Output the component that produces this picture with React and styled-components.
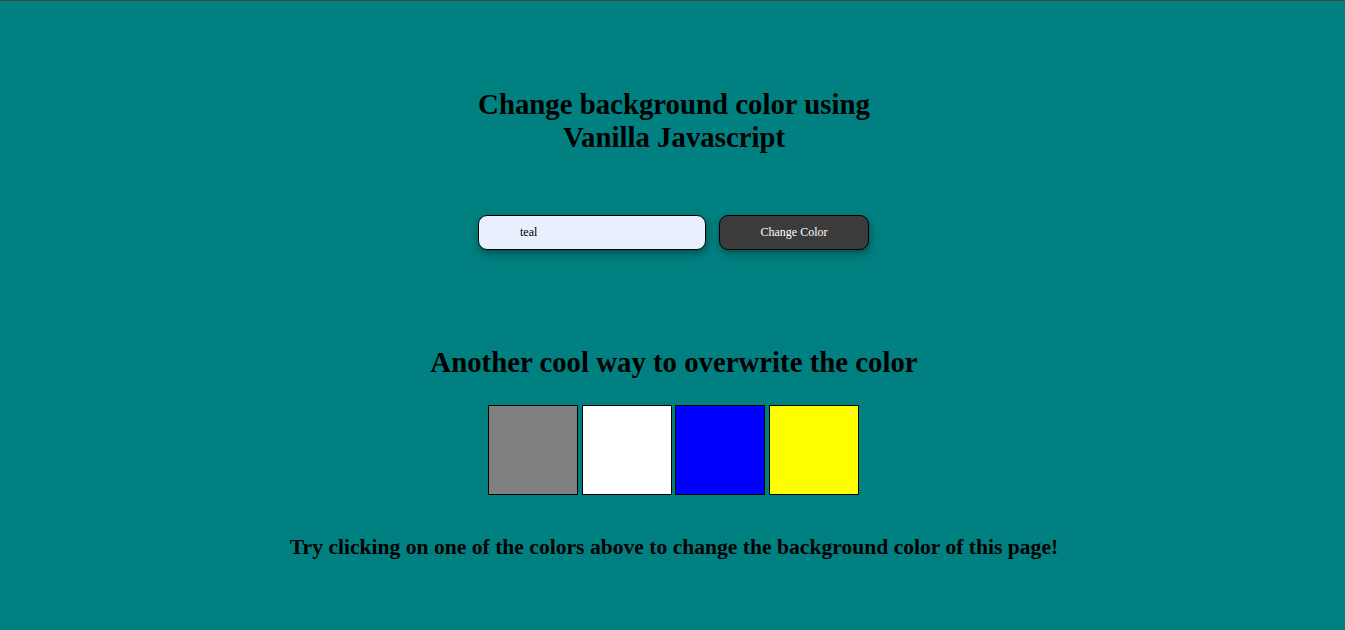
import { useState } from 'react'
import styled, { createGlobalStyle } from 'styled-components'

const GlobalStyle = createGlobalStyle`
  html, body {
    margin: 0;
    padding: 0;
  }
  body {
    font-family: "Liberation Serif", "Times New Roman", serif;
    border-top: 1px solid #444;
  }
`

const Page = styled.main`
  min-height: 629px;
  background: ${props => props.$bg};
  display: flex;
  flex-direction: column;
  align-items: center;
  padding: 87px 0 0 3px;
  box-sizing: border-box;
`

const Titulo = styled.h1`
  margin: 0;
  width: 430px;
  text-align: center;
  font-size: 28.8px;
  line-height: 33px;
  font-weight: bold;
  color: #000;
`

const Formulario = styled.form`
  display: flex;
  gap: 13px;
  margin: 61px 0 0 -1px;
`

const Entrada = styled.input`
  width: 228px;
  height: 35px;
  box-sizing: border-box;
  border: 1px solid #000;
  border-radius: 9px;
  background: #e8f0fe;
  padding: 0 0 0 41px;
  font-family: "Liberation Serif", serif;
  font-size: 12px;
  color: #000;
  box-shadow: 1px 4px 8px rgba(0, 0, 0, 0.35);
  outline: none;
`

const Boton = styled.button`
  width: 150px;
  height: 35px;
  border: 1px solid #000;
  border-radius: 9px;
  background: #3b3b3b;
  color: #fff;
  font-family: "Liberation Serif", serif;
  font-size: 12px;
  box-shadow: 1px 4px 8px rgba(0, 0, 0, 0.35);
  cursor: pointer;
`

const Subtitulo = styled.h2`
  margin: 96px 0 0;
  font-size: 28.8px;
  line-height: 33px;
  font-weight: bold;
  color: #000;
`

const Muestras = styled.div`
  display: flex;
  gap: 3.67px;
  margin: 26px 0 0 -1px;
`

const Muestra = styled.div`
  width: 90px;
  height: 90px;
  box-sizing: border-box;
  border: 1px solid #000;
  background: ${props => props.$color};
  cursor: pointer;
`

const Aviso = styled.p`
  margin: 40px 0 0;
  font-size: 21.6px;
  line-height: 24px;
  font-weight: bold;
  color: #000;
`

const colores = ['grey', 'white', 'blue', 'yellow']

const App = () => {
  const [texto, setTexto] = useState('teal')
  const [fondo, setFondo] = useState('teal')

  const cambiarColor = (e) => {
    e.preventDefault()
    setFondo(texto)
  }

  return (
    <>
      <GlobalStyle />
      <Page $bg={fondo}>
        <Titulo>Change background color using Vanilla Javascript</Titulo>
        <Formulario onSubmit={cambiarColor}>
          <Entrada value={texto} onChange={e => setTexto(e.target.value)} />
          <Boton type="submit">Change Color</Boton>
        </Formulario>
        <Subtitulo>Another cool way to overwrite the color</Subtitulo>
        <Muestras>
          {colores.map(color => (
            <Muestra key={color} $color={color} onClick={() => setFondo(color)} />
          ))}
        </Muestras>
        <Aviso>Try clicking on one of the colors above to change the background color of this page!</Aviso>
      </Page>
    </>
  )
}

export default App
